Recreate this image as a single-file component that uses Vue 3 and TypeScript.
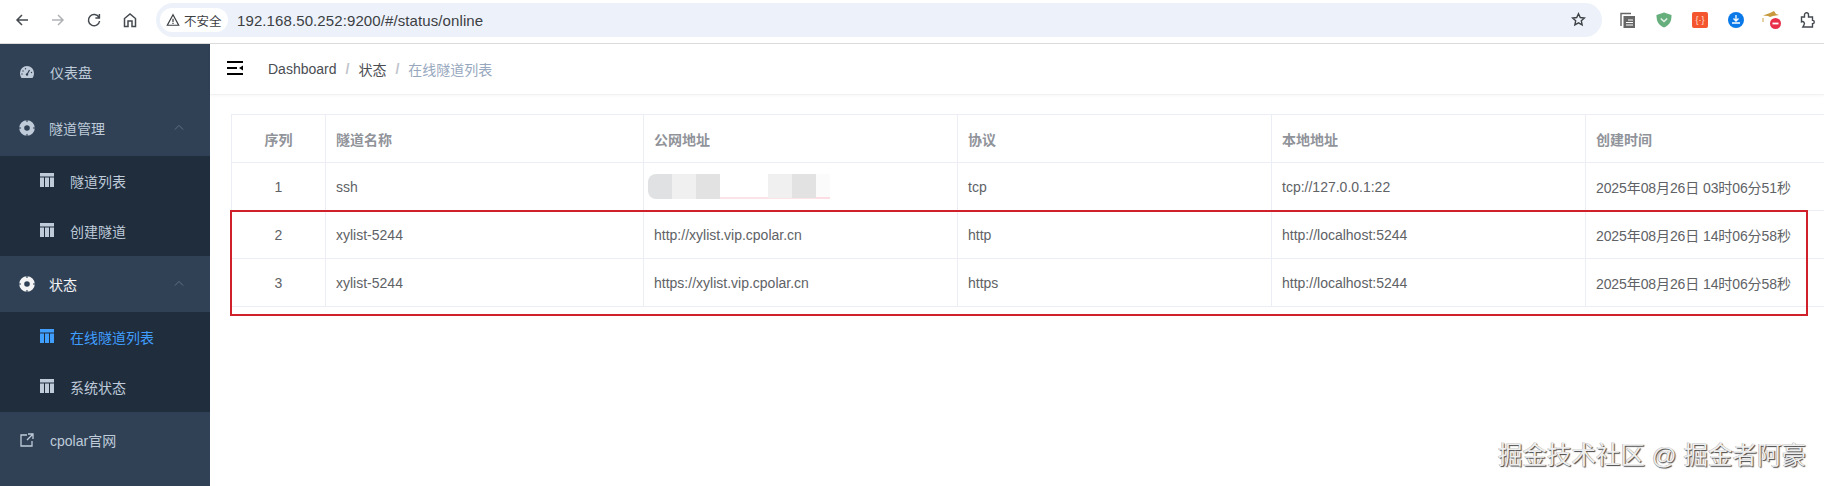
<script setup lang="ts">
interface Row { id: number; name: string; url: string; proto: string; local: string; time: string; masked?: boolean }
const rows: Row[] = [
  { id: 1, name: 'ssh', url: '', proto: 'tcp', local: 'tcp://127.0.0.1:22', time: '2025年08月26日 03时06分51秒', masked: true },
  { id: 2, name: 'xylist-5244', url: 'http://xylist.vip.cpolar.cn', proto: 'http', local: 'http://localhost:5244', time: '2025年08月26日 14时06分58秒' },
  { id: 3, name: 'xylist-5244', url: 'https://xylist.vip.cpolar.cn', proto: 'https', local: 'http://localhost:5244', time: '2025年08月26日 14时06分58秒' },
]
const heads = ['序列', '隧道名称', '公网地址', '协议', '本地地址', '创建时间']
</script>

<template>
  <div class="page">
    <div class="chrome">
      <div class="nav">
        <svg class="navicon" viewBox="0 0 16 16"><path d="M14 8H3M8 3 3 8l5 5" /></svg>
        <svg class="navicon dim" viewBox="0 0 16 16"><path d="M2 8h11M8 3l5 5-5 5" /></svg>
        <svg class="navicon" viewBox="0 0 16 16"><path d="M13 5.500A5.600 5.600 0 1 0 13.600 9M13.400 2v4h-4" /></svg>
        <svg class="navicon" viewBox="0 0 16 16"><path d="M2.500 14.500V6.500L8 2l5.500 4.500v8H10V9H6v5.500z" /></svg>
      </div>
      <div class="omni">
        <div class="chip">
          <svg class="warn" viewBox="0 0 16 16"><path d="M8 2 1.500 14h13zM8 6.500v4M8 11.500v1.200" /></svg>
          <span>不安全</span>
        </div>
        <span class="url">192.168.50.252:9200/#/status/online</span>
        <svg class="star" viewBox="0 0 16 16"><path d="m8 1.800 1.900 4.100 4.400.5-3.300 3 .9 4.400L8 11.600l-3.900 2.200.9-4.400-3.300-3 4.400-.5z" /></svg>
      </div>
      <div class="exts">
        <svg class="ext" viewBox="0 0 16 16"><path d="M1 14V1.500h10" fill="none" stroke="#666" stroke-width="1.400" /><rect x="3.500" y="4" width="11.500" height="12" fill="#666" /><path d="M8 8h5M6 10.500h7M6 13h7" stroke="#fff" stroke-width="1.100" /></svg>
        <svg class="ext" viewBox="0 0 16 16"><path d="M8 .5 15.500 3c0 6-1.500 10-7.500 12.500C2 13 .5 9 .5 3z" fill="#67ae7d" /><path d="m4.800 6.500 3.200 3 3.200-3" fill="none" stroke="#e4f3e8" stroke-width="1.500" /></svg>
        <div class="bracebox">{·}</div>
        <svg class="ext" viewBox="0 0 16 16"><circle cx="8" cy="8" r="8" fill="#0b79e8" /><path d="M8 3v5.500M5.500 6.500 8 9l2.500-2.500M4 11h8" fill="none" stroke="#fff" stroke-width="1.300" /></svg>
        <svg class="ext wide" viewBox="0 0 20 20"><path d="M1 5.500 8 3l4-2 2 3 3 1-6 1-3 1-2-1z" fill="#c99a3d" /><path d="M1 8v4" stroke="#d6b46c" stroke-width="1.200" /><circle cx="13.500" cy="13.500" r="5.500" fill="#e8304a" /><rect x="10.500" y="12.600" width="6" height="1.800" fill="#fff" /></svg>
        <svg class="ext puzzle" viewBox="0 0 16 16"><path d="M1.500 5h3V2.800a2 2 0 0 1 4 0V5h4v3.200a1.800 1.800 0 0 1 0 3.600V15H2.800l1.200-2.200a2 2 0 0 0-2.500-3z" /></svg>
      </div>
    </div>

    <div class="body">
      <aside class="side">
        <div class="item">
          <svg class="ic" viewBox="0 0 14 12"><path d="M7 0a7 7 0 0 1 7 7c0 2-.6 3.700-1.500 5h-11A7.800 7.800 0 0 1 0 7a7 7 0 0 1 7-7z" /><path d="M7 8.500 9.500 4" stroke="#304156" stroke-width="1.200" /><circle cx="7" cy="8.500" r="1.200" fill="#304156" /><circle cx="3" cy="5" r=".7" fill="#304156" /><circle cx="5.500" cy="2.800" r=".7" fill="#304156" /><circle cx="11.500" cy="6.500" r=".7" fill="#304156" /><circle cx="2" cy="8" r=".7" fill="#304156" /></svg>
          <span>仪表盘</span>
        </div>
        <div class="item group">
          <svg class="ic ring" viewBox="0 0 16 16"><circle cx="8" cy="8" r="5.300" fill="none" stroke="currentColor" stroke-width="5" /><path d="M8 0v2M8 14v2M0 8h2M14 8h2" stroke="#304156" stroke-width="1.600" opacity=".7" /></svg>
          <span>隧道管理</span>
          <svg class="caret" viewBox="0 0 12 8"><path d="M1 6.500 6 1.500l5 5" /></svg>
        </div>
        <div class="sub">
          <div class="subitem"><svg class="tbl" viewBox="0 0 14 14"><path d="M0 0h14v3.500H0zM0 4.500h4v9.500H0zM5 4.500h4v9.500H5zM10 4.500h4v9.500h-4z" /></svg><span>隧道列表</span></div>
          <div class="subitem"><svg class="tbl" viewBox="0 0 14 14"><path d="M0 0h14v3.500H0zM0 4.500h4v9.500H0zM5 4.500h4v9.500H5zM10 4.500h4v9.500h-4z" /></svg><span>创建隧道</span></div>
        </div>
        <div class="item group on">
          <svg class="ic ring" viewBox="0 0 16 16"><circle cx="8" cy="8" r="5.300" fill="none" stroke="currentColor" stroke-width="5" /><path d="M8 0v2M8 14v2M0 8h2M14 8h2" stroke="#304156" stroke-width="1.600" opacity=".7" /></svg>
          <span>状态</span>
          <svg class="caret" viewBox="0 0 12 8"><path d="M1 6.500 6 1.500l5 5" /></svg>
        </div>
        <div class="sub">
          <div class="subitem active"><svg class="tbl" viewBox="0 0 14 14"><path d="M0 0h14v3.500H0zM0 4.500h4v9.500H0zM5 4.500h4v9.500H5zM10 4.500h4v9.500h-4z" /></svg><span>在线隧道列表</span></div>
          <div class="subitem"><svg class="tbl" viewBox="0 0 14 14"><path d="M0 0h14v3.500H0zM0 4.500h4v9.500H0zM5 4.500h4v9.500H5zM10 4.500h4v9.500h-4z" /></svg><span>系统状态</span></div>
        </div>
        <div class="item">
          <svg class="ic link" viewBox="0 0 14 14"><path d="M7 2H1v11h11V8M8 1h5v5M13 1 7 7" /></svg>
          <span>cpolar官网</span>
        </div>
      </aside>

      <main class="main">
        <header class="bar">
          <svg class="fold" viewBox="0 0 16 14"><path d="M0 0h16v2H0zM0 6h10v2H0zM0 12h16v2H0zM16 4.500v5L12 7z" /></svg>
          <nav class="crumbs">
            <span class="c1">Dashboard</span><i>/</i><span class="c1">状态</span><i>/</i><span class="c2">在线隧道列表</span>
          </nav>
        </header>
        <section class="content">
          <table class="tb">
            <colgroup>
              <col class="w1" /><col class="w2" /><col class="w3" /><col class="w4" /><col class="w5" /><col class="w6" />
            </colgroup>
            <thead>
              <tr>
                <th v-for="(h, i) in heads" :key="h" :class="{ center: i === 0 }">{{ h }}</th>
              </tr>
            </thead>
            <tbody>
              <tr v-for="r in rows" :key="r.id">
                <td class="center">{{ r.id }}</td>
                <td>{{ r.name }}</td>
                <td>
                  <div v-if="r.masked" class="mask">
                    <b class="m1"></b><b class="m2"></b><b class="m3"></b><b class="m4"></b><b class="m2 pink"></b><b class="m3 pink"></b><b class="m5"></b>
                  </div>
                  <template v-else>{{ r.url }}</template>
                </td>
                <td>{{ r.proto }}</td>
                <td>{{ r.local }}</td>
                <td class="time">{{ r.time }}</td>
              </tr>
            </tbody>
          </table>
          <div class="redbox"></div>
        </section>
      </main>
    </div>
    <div class="mark">掘金技术社区 @ 掘金者阿豪</div>
  </div>
</template>

<style>
html, body { margin: 0; background: #fff; overflow: hidden; }
</style>

<style scoped>
.page {
  position: relative;
  width: 1824px;
  height: 486px;
  overflow: hidden;
  display: flex;
  flex-direction: column;
  font-family: "Liberation Sans", "Noto Sans CJK SC", sans-serif;
  background: #fff;
}
.chrome {
  height: 44px;
  flex: none;
  display: flex;
  align-items: center;
  border-bottom: 1px solid #dcdcdc;
  padding-bottom: 3px;
  box-sizing: border-box;
  background: #fff;
}
.nav {
  display: flex;
  align-items: center;
  gap: 20px;
  padding-left: 14px;
  width: 156px;
  box-sizing: border-box;
  flex: none;
}
.navicon {
  width: 16px;
  height: 16px;
  fill: none;
  stroke: #444a50;
  stroke-width: 1.500;
  flex: none;
}
.navicon.dim { stroke: #b0b3b6; }
.omni {
  width: 1446px;
  height: 34px;
  border-radius: 17px;
  background: #edf2fa;
  display: flex;
  align-items: center;
  padding-left: 4px;
  box-sizing: border-box;
  position: relative;
  flex: none;
}
.chip {
  height: 24px;
  width: 68px;
  padding-left: 6px;
  box-sizing: border-box;
  border-radius: 12px;
  background: #fff;
  display: flex;
  align-items: center;
  gap: 4px;
  font-size: 12.500px;
  color: #3c4043;
  flex: none;
}
.warn { width: 14px; height: 14px; fill: none; stroke: #3c4043; stroke-width: 1.400; flex: none; }
.url {
  margin-left: 9px;
  font-size: 15px;
  letter-spacing: 0.1px;
  color: #3c4043;
}
.star {
  position: absolute;
  left: 1415px;
  top: 9px;
  width: 15px;
  height: 15px;
  fill: none;
  stroke: #3f4347;
  stroke-width: 1.500;
}
.exts {
  display: flex;
  align-items: center;
  margin-left: 18px;
  gap: 20px;
}
.ext { width: 16px; height: 16px; flex: none; }
.ext.wide { width: 20px; height: 20px; margin-left: -2px; margin-right: -2px; }
.bracebox {
  width: 16px;
  height: 16px;
  background: #f4552e;
  border-radius: 2px;
  color: #ffe3da;
  font-size: 9px;
  line-height: 16px;
  text-align: center;
  flex: none;
}
.puzzle { fill: none; stroke: #444a50; stroke-width: 1.400; }
.body { flex: 1; display: flex; min-height: 0; }
.side {
  width: 210px;
  flex: none;
  background: #304156;
  display: flex;
  flex-direction: column;
  font-size: 14px;
  color: #bfcbd9;
}
.item {
  height: 56px;
  flex: none;
  display: flex;
  align-items: center;
  padding-left: 20px;
  position: relative;
}
.ic {
  width: 14px;
  height: 12px;
  margin-right: 16px;
  fill: #bfcbd9;
  flex: none;
}
.ring { width: 16px; height: 16px; margin-left: -1px; margin-right: 14px; color: #bfcbd9; }
.on .ring, .on { color: #f4f4f5; }
.link { height: 14px; fill: none; stroke: #bfcbd9; stroke-width: 1.300; }
.caret {
  position: absolute;
  right: 26px;
  top: 24px;
  width: 10px;
  height: 7px;
  fill: none;
  stroke: #6b7989;
  stroke-width: 1;
}
.sub { background: #1f2d3d; flex: none; }
.subitem {
  height: 50px;
  display: flex;
  align-items: center;
  padding-left: 40px;
}
.tbl {
  width: 14px;
  height: 14px;
  margin-right: 16px;
  fill: #bfcbd9;
  flex: none;
  position: relative;
  top: -1px;
}
.active { color: #409eff; }
.active .tbl { fill: #409eff; }
.main { flex: 1; min-width: 0; display: flex; flex-direction: column; }
.bar {
  height: 51px;
  flex: none;
  border-bottom: 1px solid #f0f1f2;
  box-shadow: 0 1px 3px rgba(0, 21, 41, 0.03);
  display: flex;
  align-items: center;
  box-sizing: border-box;
}
.fold { width: 16px; height: 14px; margin-left: 17px; fill: #000; flex: none; position: relative; top: -1px; }
.crumbs {
  margin-left: 25px;
  font-size: 14px;
  display: flex;
  align-items: center;
}
.crumbs i { font-style: normal; color: #c0c4cc; margin: 0 9px; font-weight: 700; }
.c1 { color: #4a4d52; }
.c2 { color: #97a8be; }
.content { position: relative; flex: 1; padding: 19px 0 0 21px; }
.tb {
  width: 1614px;
  table-layout: fixed;
  border-collapse: collapse;
  font-size: 14px;
  color: #606266;
  border-top: 1px solid #ebeef5;
  border-left: 1px solid #ebeef5;
}
.w1 { width: 94px; } .w2 { width: 318px; } .w3 { width: 314px; } .w4 { width: 314px; } .w5 { width: 314px; } .w6 { width: 260px; }
th, td {
  height: 48px;
  padding: 0 10px;
  box-sizing: border-box;
  text-align: left;
  border-bottom: 1px solid #ebeef5;
  border-right: 1px solid #ebeef5;
  white-space: nowrap;
}
th:last-child, td:last-child { border-right: 0; }
th { color: #909399; font-weight: 700; font-size: 14px; }
.center { text-align: center; }
.time { letter-spacing: -0.1px; }
.mask { display: flex; height: 25px; margin-left: -6px; }
.mask b { width: 24px; height: 25px; display: block; flex: none; box-sizing: border-box; }
.m1 { background: #dfe1e3; border-radius: 8px 0 0 8px; }
.m2 { background: #f0f0f0; }
.m3 { background: #e2e2e2; }
.pink { border-bottom: 1px solid #fbe4e8; }
.mask .m4 { width: 48px; border-bottom: 2px solid #fbe4e8; }
.mask .m5 { width: 14px; background: #fbfbfb; border-bottom: 2px solid #fbdde3; }
.redbox {
  position: absolute;
  left: 20px;
  top: 115px;
  width: 1578px;
  height: 106px;
  border: 2px solid #d0202a;
  box-sizing: border-box;
}
.mark {
  position: absolute;
  left: 1498px;
  top: 441px;
  font-size: 24.500px;
  line-height: 30px;
  color: #eeeeee;
  white-space: nowrap;
  text-shadow: 1px 1px 1px #444, -0.5px -0.5px 0 #aaa;
}
</style>
